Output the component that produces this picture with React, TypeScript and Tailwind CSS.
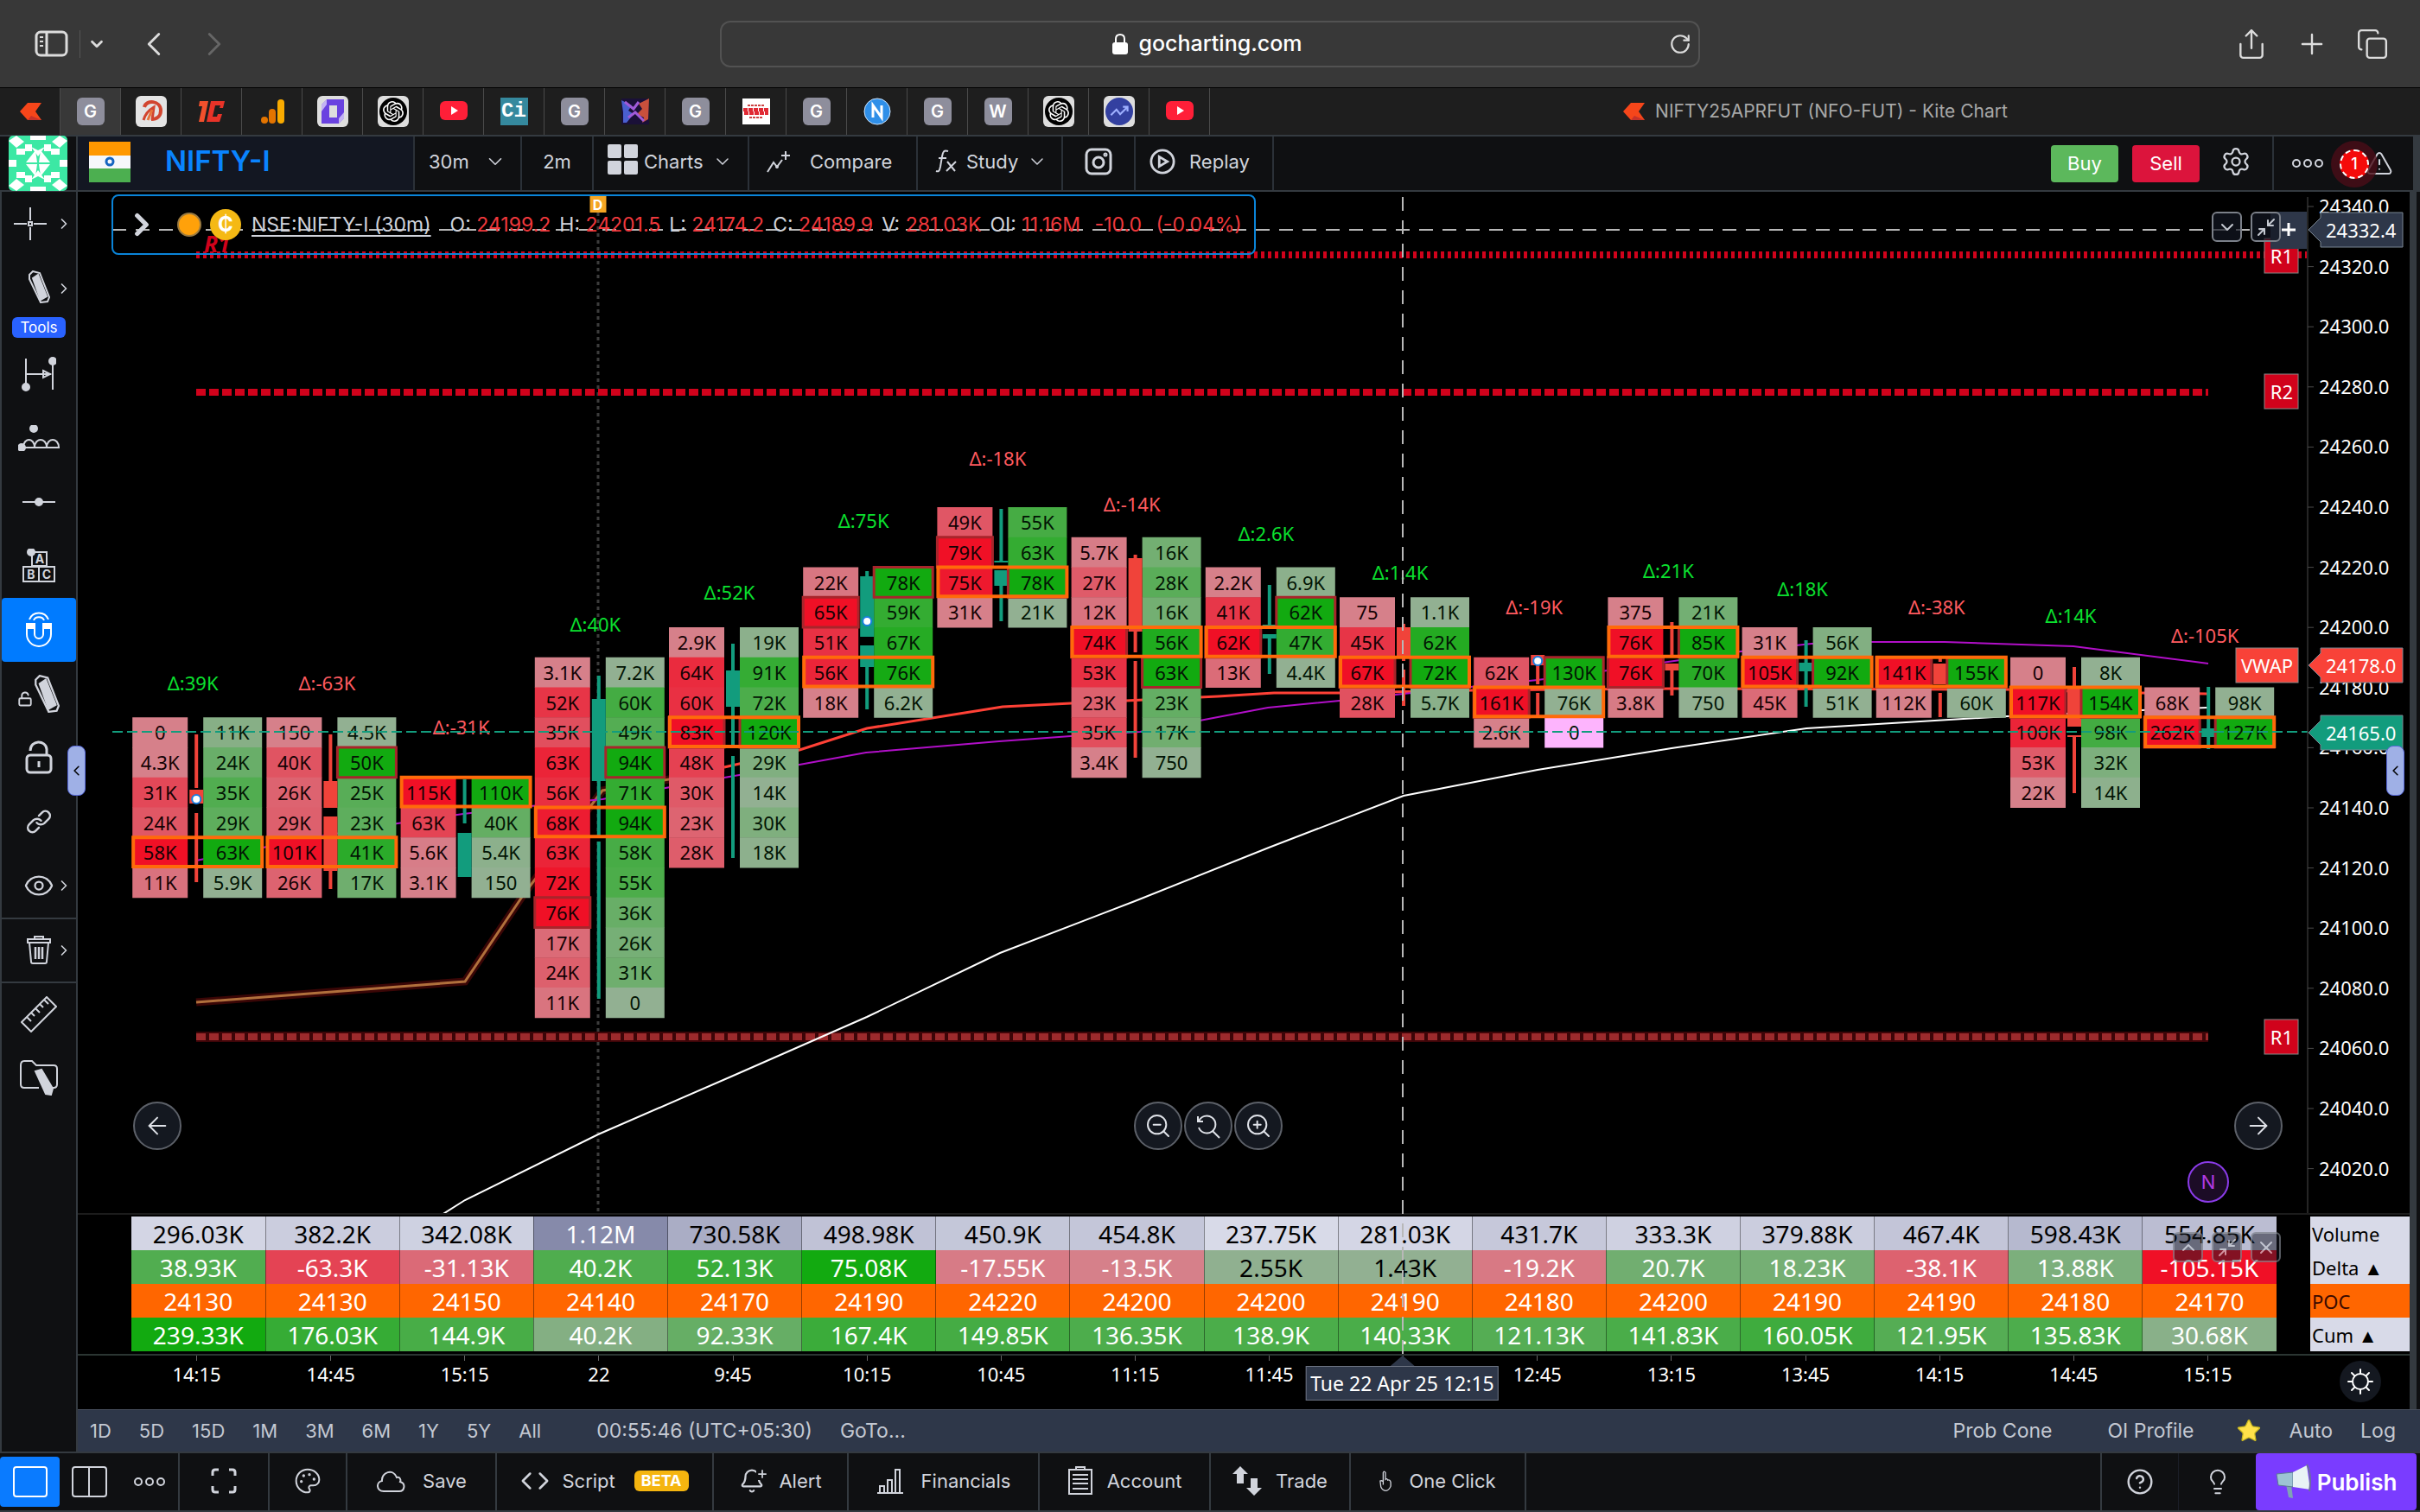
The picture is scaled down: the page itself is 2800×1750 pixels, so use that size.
import type { ReactNode } from "react";
import {
  ArrowLeft,
  ArrowRight,
  Bell,
  ChevronDown,
  ChevronLeft,
  ChevronRight,
  ChevronUp,
  CircleHelp,
  Code,
  Copy,
  Eye,
  Lightbulb,
  LockOpen,
  Minimize2,
  Palette,
  Plus,
  RotateCw,
  Settings,
  Share,
  Star,
  TriangleAlert,
  X,
  ZoomIn,
  ZoomOut,
} from "lucide-react";
import { SiOpenai } from "react-icons/si";

type Bar = {
  time: string;
  top: number; // index of the first price row
  sell: string[];
  buy: string[];
  poc: number;
  maxSell?: number;
  maxBuy?: number;
  up: boolean;
  wick: number[][];
  body: number[][];
  dot?: number;
  delta: string;
  deltaY: number;
};

const bars: Bar[] = [
  { time: "14:15", top: 7, sell: ["0", "4.3K", "31K", "24K", "58K", "11K"], buy: ["11K", "24K", "35K", "29K", "63K", "5.9K"], poc: 4, up: false, wick: [[850, 912], [941, 1021]], body: [[914, 930]], dot: 925, delta: "39K", deltaY: 791 },
  { time: "14:45", top: 7, sell: ["150", "40K", "26K", "29K", "101K", "26K"], buy: ["4.5K", "50K", "25K", "23K", "41K", "17K"], poc: 4, maxBuy: 1, up: false, wick: [[850, 904], [1008, 1029]], body: [[904, 935], [945, 1008]], delta: "-63K", deltaY: 791 },
  { time: "15:15", top: 9, sell: ["115K", "63K", "5.6K", "3.1K"], buy: ["110K", "40K", "5.4K", "150"], poc: 0, up: true, wick: [[902, 953]], body: [[964, 1015]], delta: "-31K", deltaY: 842 },
  { time: "22", top: 5, sell: ["3.1K", "52K", "35K", "63K", "56K", "68K", "63K", "72K", "76K", "17K", "24K", "11K"], buy: ["7.2K", "60K", "49K", "94K", "71K", "94K", "58K", "55K", "36K", "26K", "31K", "0"], poc: 5, maxSell: 8, maxBuy: 3, up: true, wick: [[782, 968], [974, 1156]], body: [[809, 904]], delta: "40K", deltaY: 723 },
  { time: "9:45", top: 4, sell: ["2.9K", "64K", "60K", "83K", "48K", "30K", "23K", "28K"], buy: ["19K", "91K", "72K", "120K", "29K", "14K", "30K", "18K"], poc: 3, maxSell: 3, maxBuy: 3, up: true, wick: [[745, 865], [875, 993]], body: [[776, 818]], delta: "52K", deltaY: 686 },
  { time: "10:15", top: 2, sell: ["22K", "65K", "51K", "56K", "18K"], buy: ["78K", "59K", "67K", "76K", "6.2K"], poc: 3, maxSell: 1, maxBuy: 0, up: true, wick: [[661, 667], [772, 821]], body: [[667, 737], [747, 772]], dot: 719, delta: "75K", deltaY: 603 },
  { time: "10:45", top: 0, sell: ["49K", "79K", "75K", "31K"], buy: ["55K", "63K", "78K", "21K"], poc: 2, maxSell: 1, maxBuy: 2, up: true, wick: [[589, 650], [678, 719]], body: [[649, 651], [660, 678]], delta: "-18K", deltaY: 531 },
  { time: "11:15", top: 1, sell: ["5.7K", "27K", "12K", "74K", "53K", "23K", "35K", "3.4K"], buy: ["16K", "28K", "16K", "56K", "63K", "23K", "17K", "750"], poc: 3, maxSell: 3, maxBuy: 4, up: false, wick: [[642, 755], [765, 877]], body: [[646, 731]], delta: "-14K", deltaY: 584 },
  { time: "11:45", top: 2, sell: ["2.2K", "41K", "62K", "13K"], buy: ["6.9K", "62K", "47K", "4.4K"], poc: 2, maxSell: 2, maxBuy: 1, up: true, wick: [[677, 724], [734, 780]], body: [[723, 725], [734, 739]], delta: "2.6K", deltaY: 618 },
  { time: "12:15", top: 3, sell: ["75", "45K", "67K", "28K"], buy: ["1.1K", "62K", "72K", "5.7K"], poc: 2, maxSell: 2, maxBuy: 2, up: false, wick: [[722, 765], [775, 817]], body: [[726, 761]], delta: "1.4K", deltaY: 663 },
  { time: "12:45", top: 5, sell: ["62K", "161K", "2.6K"], buy: ["130K", "76K", "0"], poc: 1, maxSell: 1, maxBuy: 0, up: false, wick: [[758, 792], [802, 830]], body: [[758, 770]], dot: 765, delta: "-19K", deltaY: 703 },
  { time: "13:15", top: 3, sell: ["375", "76K", "76K", "3.8K"], buy: ["21K", "85K", "70K", "750"], poc: 1, maxSell: 2, maxBuy: 1, up: false, wick: [[720, 759], [768, 805]], body: [[768, 776]], delta: "21K", deltaY: 661 },
  { time: "13:45", top: 4, sell: ["31K", "105K", "45K"], buy: ["56K", "92K", "51K"], poc: 1, maxSell: 1, maxBuy: 1, up: true, wick: [[741, 818]], body: [[767, 777]], delta: "18K", deltaY: 682 },
  { time: "14:15", top: 5, sell: ["141K", "112K"], buy: ["155K", "60K"], poc: 0, maxSell: 0, maxBuy: 0, up: false, wick: [[762, 766], [802, 830]], body: [[768, 792]], delta: "-38K", deltaY: 703 },
  { time: "14:45", top: 5, sell: ["0", "117K", "100K", "53K", "22K"], buy: ["8K", "154K", "98K", "32K", "14K"], poc: 1, maxSell: 1, maxBuy: 1, up: false, wick: [[772, 797], [852, 918]], body: [[797, 841], [851, 853]], delta: "14K", deltaY: 713 },
  { time: "15:15", top: 6, sell: ["68K", "262K"], buy: ["98K", "127K"], poc: 1, maxSell: 1, maxBuy: 1, up: true, wick: [[795, 867]], body: [[843, 853]], delta: "-105K", deltaY: 736 },
];

const stats = [
  { volume: "296.03K", delta: "38.93K", poc: "24130", cum: "239.33K" },
  { volume: "382.2K", delta: "-63.3K", poc: "24130", cum: "176.03K" },
  { volume: "342.08K", delta: "-31.13K", poc: "24150", cum: "144.9K" },
  { volume: "1.12M", delta: "40.2K", poc: "24140", cum: "40.2K" },
  { volume: "730.58K", delta: "52.13K", poc: "24170", cum: "92.33K" },
  { volume: "498.98K", delta: "75.08K", poc: "24190", cum: "167.4K" },
  { volume: "450.9K", delta: "-17.55K", poc: "24220", cum: "149.85K" },
  { volume: "454.8K", delta: "-13.5K", poc: "24200", cum: "136.35K" },
  { volume: "237.75K", delta: "2.55K", poc: "24200", cum: "138.9K" },
  { volume: "281.03K", delta: "1.43K", poc: "24190", cum: "140.33K" },
  { volume: "431.7K", delta: "-19.2K", poc: "24180", cum: "121.13K" },
  { volume: "333.3K", delta: "20.7K", poc: "24200", cum: "141.83K" },
  { volume: "379.88K", delta: "18.23K", poc: "24190", cum: "160.05K" },
  { volume: "467.4K", delta: "-38.1K", poc: "24190", cum: "121.95K" },
  { volume: "598.43K", delta: "13.88K", poc: "24180", cum: "135.83K" },
  { volume: "554.85K", delta: "-105.15K", poc: "24170", cum: "30.68K" },
];

const toNumber = (s: string) => {
  const n = parseFloat(s);
  if (s.endsWith("M")) return n * 1000000;
  if (s.endsWith("K")) return n * 1000;
  return n;
};

const mix = (from: number[], to: number[], t: number) => {
  const k = Math.max(0, Math.min(1, t));
  return `rgb(${from.map((c, i) => Math.round(c + (to[i] - c) * k)).join(",")})`;
};

const redScale = (t: number) => mix([214, 128, 138], [240, 16, 38], t);
const greenScale = (t: number) => mix([146, 176, 146], [18, 170, 16], t);

const shade = (values: string[], i: number, scale: (t: number) => string) => {
  const all = values.map(toNumber);
  const nonZero = all.filter((v) => v > 0);
  const min = Math.min(...nonZero);
  const max = Math.max(...nonZero);
  return scale((all[i] - min) / (max - min));
};

const STEP = 155.2;
const ROW = 34.75;
const centerX = (i: number) => 227.2 + i * STEP;
const rowY = (k: number) => 587 + k * ROW;
const priceY = (p: number) => 239 + (24340 - p) * 3.48;
const points = (list: number[][]) => list.map((p) => p.join(",")).join(" ");

const vwapStart = [[227, 1160], [538, 1136], [606, 1035], [697, 915], [780, 901], [838, 888]];
const vwap = [[838, 888], [925, 868], [1003, 843], [1160, 818], [1239, 814], [1409, 806], [1474, 802], [1550, 802], [1704, 799], [1936, 797], [2321, 798], [2477, 802], [2554, 803]];
const purple = [[227, 996], [376, 967], [460, 953], [536, 942], [614, 933], [697, 925], [770, 912], [838, 900], [925, 885], [1002, 871], [1156, 858], [1239, 852], [1319, 847], [1388, 834], [1467, 819], [1550, 811], [1624, 803], [1779, 787], [1860, 776], [2014, 754], [2096, 745], [2165, 743], [2250, 743], [2399, 748], [2555, 768]];
const white = [[508, 1408], [538, 1389], [692, 1313], [846, 1246], [1003, 1177], [1157, 1103], [1313, 1043], [1468, 981], [1624, 921], [1779, 891], [1934, 866], [2090, 843], [2323, 829], [2477, 822], [2554, 819]];

const prices = [24340, 24320, 24300, 24280, 24260, 24240, 24220, 24200, 24180, 24160, 24140, 24120, 24100, 24080, 24060, 24040, 24020];

const Level = ({ y, label }: { y: number; label: string }) => (
  <g>
    <rect x={2620} y={y - 20} width={39} height={40} fill="#d0021b" stroke="#8a8a8a" />
    <text x={2640} y={y + 9} fill="#fff" textAnchor="middle">{label}</text>
  </g>
);

const PriceTag = ({ y, label, fill }: { y: number; label: string; fill: string }) => (
  <g>
    <path d={`M2671 ${y}L2685 ${y - 14}V${y - 20}H2780V${y + 20}H2685V${y + 14}Z`} fill={fill} stroke="#7b8794" />
    <text x={2691} y={y + 9} fill="#fff">{label}</text>
  </g>
);

const FootprintBar = ({ bar, index }: { bar: Bar; index: number }) => {
  const c = centerX(index);
  const color = bar.up ? "#129c7d" : "#f0433a";
  return (
    <g>
      {bar.sell.map((v, i) => (
        <rect key={i} x={c - 74} y={rowY(bar.top + i)} width={64} height={ROW + 0.5} fill={shade(bar.sell, i, redScale)} />
      ))}
      {bar.buy.map((v, i) => (
        <rect key={i} x={c + 8} y={rowY(bar.top + i)} width={68} height={ROW + 0.5} fill={index === 10 && v === "0" ? "#fdb4fd" : shade(bar.buy, i, greenScale)} />
      ))}
      {bar.wick.map((w, i) => (
        <rect key={i} x={c - 2} y={w[0]} width={4} height={w[1] - w[0]} fill={color} />
      ))}
      {bar.body.map((b, i) => (
        <rect key={i} x={c - 8} y={b[0]} width={16} height={b[1] - b[0]} fill={color} />
      ))}
      {bar.maxSell !== undefined && (
        <rect x={c - 74} y={rowY(bar.top + bar.maxSell)} width={64} height={ROW} fill="none" stroke="#a8252b" strokeWidth={3} />
      )}
      {bar.maxBuy !== undefined && (
        <rect x={c + 8} y={rowY(bar.top + bar.maxBuy)} width={68} height={ROW} fill="none" stroke="#a8252b" strokeWidth={3} />
      )}
      <rect x={c - 73} y={rowY(bar.top + bar.poc)} width={149} height={ROW - 1} fill="none" stroke="#ff6a0a" strokeWidth={4} />
      {bar.sell.map((v, i) => (
        <text key={i} x={c - 42} y={rowY(bar.top + i) + 26} textAnchor="middle" fill="#140204">{v}</text>
      ))}
      {bar.buy.map((v, i) => (
        <text key={i} x={c + 42} y={rowY(bar.top + i) + 26} textAnchor="middle" fill="#021404">{v}</text>
      ))}
      {bar.dot && <circle cx={c} cy={bar.dot} r={5} fill="#fff" stroke="#1a7fe0" strokeWidth={2} />}
      <text x={c - 4} y={bar.deltaY + 8} textAnchor="middle" fill={bar.delta.startsWith("-") ? "#ff5a5f" : "#0be02f"} className="text-[22px]">
        Δ:{bar.delta}
      </text>
    </g>
  );
};

const PriceChart = () => (
  <svg viewBox="90 222 2698 1182" className="block w-full font-['Noto_Sans',sans-serif] text-[22px]">
    <line x1={692} y1={246} x2={692} y2={1404} stroke="#3c3c3c" strokeWidth={3} strokeDasharray="4 4" />
    <line x1={227} y1={295} x2={2669} y2={295} stroke="#d0021b" strokeWidth={8} strokeDasharray="4 4" />
    <line x1={227} y1={454} x2={2555} y2={454} stroke="#d0021b" strokeWidth={8} strokeDasharray="11 4" />
    <line x1={227} y1={1200} x2={2555} y2={1200} stroke="#3d0508" strokeWidth={12} />
    <line x1={227} y1={1200} x2={2555} y2={1200} stroke="#9c2a2c" strokeWidth={8} strokeDasharray="11 4" />
    <text x={236} y={292} fill="#d0021b" className="text-[26px] font-bold italic">R1</text>
    <polyline points={points(white)} fill="none" stroke="#fff" strokeWidth={2} />
    <polyline points={points(vwapStart)} fill="none" stroke="#3a0606" strokeWidth={9} />
    <polyline points={points(vwapStart)} fill="none" stroke="#b0703c" strokeWidth={3} />
    <polyline points={points(vwap)} fill="none" stroke="#ff4136" strokeWidth={3} />
    <polyline points={points(purple)} fill="none" stroke="#b10fc8" strokeWidth={2} />
    {bars.map((bar, i) => (
      <FootprintBar key={i} bar={bar} index={i} />
    ))}
    <line x1={130} y1={847} x2={2670} y2={847} stroke="#129c7d" strokeWidth={2} strokeDasharray="12 5" />
    <line x1={130} y1={266} x2={2620} y2={266} stroke="#b8b8b8" strokeWidth={2} strokeDasharray="16 11" />

    <Level y={296} label="R1" />
    <Level y={453} label="R2" />
    <Level y={1200} label="R1" />
    <rect x={2627} y={245} width={42} height={43} fill="#2e3749" />
    <path d="M2648 258V273M2640 266H2656" stroke="#fff" strokeWidth={3} />
    <rect x={2587} y={750} width={72} height={40} fill="#f84238" stroke="#8a8a8a" />
    <text x={2623} y={779} fill="#fff" textAnchor="middle">VWAP</text>

    <line x1={2670} y1={228} x2={2670} y2={1404} stroke="#4a4a4a" strokeWidth={1} />
    <g>
      {prices.map((p) => (
        <g key={p}>
          <line x1={2670} y1={priceY(p)} x2={2677} y2={priceY(p)} stroke="#4a4a4a" />
          <text x={2683} y={priceY(p) + 8} fill="#fff">{p}.0</text>
        </g>
      ))}
      <PriceTag y={266} label="24332.4" fill="#2e3749" />
      <PriceTag y={770} label="24178.0" fill="#f84238" />
      <PriceTag y={848} label="24165.0" fill="#129c7d" />
    </g>
  </svg>
);

const deltaColor = (s: string) => {
  const v = toNumber(s);
  return v < 0 ? redScale((-v - 13500) / 91650) : greenScale((v - 1430) / 73650);
};

const StatsTable = () => (
  <table className="ml-[62px] w-[calc(100%-62px)] table-fixed border-collapse text-center font-['Noto_Sans',sans-serif] text-[28px] leading-[38px] text-white">
    <colgroup>
      {stats.map((s, i) => (
        <col key={i} />
      ))}
      <col className="w-[39px]" />
      <col className="w-[115px]" />
    </colgroup>
    <tbody>
      <tr className="h-[39px]">
        {stats.map((s, i) => (
          <td key={i} className={`border-r border-black/40 p-0 ${s.volume === "1.12M" ? "text-white" : "text-black"}`} style={{ backgroundColor: mix([216, 218, 232], [134, 138, 170], (toNumber(s.volume) - 237750) / 882250) }}>
            {s.volume}
          </td>
        ))}
        <td />
        <th className="bg-[#d8dae8] p-0 pl-0.5 text-left text-[22px] font-normal text-black">Volume</th>
      </tr>
      <tr className="h-[39px]">
        {stats.map((s, i) => (
          <td key={i} className={`border-r border-black/40 p-0 ${i === 8 || i === 9 ? "text-black" : "text-white"}`} style={{ backgroundColor: deltaColor(s.delta) }}>
            {s.delta}
          </td>
        ))}
        <td />
        <th className="bg-[#d8dae8] p-0 pl-0.5 text-left text-[22px] font-normal text-black">Delta ▲</th>
      </tr>
      <tr className="h-[39px]">
        {stats.map((s, i) => (
          <td key={i} className="border-r border-black/40 bg-[#ff6600] p-0">{s.poc}</td>
        ))}
        <td />
        <th className="bg-[#ff6600] p-0 pl-0.5 text-left text-[22px] font-normal text-[#3a0a00]">POC</th>
      </tr>
      <tr className="h-[39px]">
        {stats.map((s, i) => (
          <td key={i} className="border-r border-black/40 p-0" style={{ backgroundColor: greenScale((toNumber(s.cum) - 15000) / 224330) }}>
            {s.cum}
          </td>
        ))}
        <td />
        <th className="bg-[#d8dae8] p-0 pl-0.5 text-left text-[22px] font-normal text-black">Cum ▲</th>
      </tr>
    </tbody>
  </table>
);

const TimeAxis = () => (
  <div className="relative h-16 border-t-2 border-[#2b3532]">
    <div className="ml-[60px] mr-[156px] flex font-['Noto_Sans',sans-serif] text-[22px] leading-[30px] text-white">
      {bars.map((b, i) => (
        <div key={i} className="flex flex-1 flex-col items-center">
          <span className="h-1.5 w-px bg-[#666]" />
          {b.time}
        </div>
      ))}
    </div>
    <div className="absolute left-[56.8%] top-0 flex -translate-x-1/2 flex-col items-center">
      <svg width={28} height={12} viewBox="0 0 28 12"><path d="M14 0L28 12H0Z" fill="#2e3749" /></svg>
      <div className="border border-[#6b7280] bg-[#2e3749] px-1 font-['Noto_Sans',sans-serif] text-[23px] leading-[38px] whitespace-nowrap text-white">Tue 22 Apr 25 12:15</div>
    </div>
    <button aria-label="Axis settings" className="absolute right-[33px] top-1.5 flex size-12 items-center justify-center rounded-full bg-[#141820] text-white">
      <svg width={32} height={32} viewBox="0 0 32 32" fill="none" stroke="currentColor" strokeWidth={2} strokeLinecap="round">
        <circle cx={16} cy={16} r={9} />
        <path d="M16 2v4M16 26v4M2 16h4M26 16h4M6 6l3 3M23 23l3 3M6 26l3-3M23 9l3-3" />
      </svg>
    </button>
  </div>
);

const Tile = ({ bg, children }: { bg: string; children: ReactNode }) => (
  <span className={`flex size-8 items-center justify-center rounded-md text-xl font-semibold text-white ${bg}`}>{children}</span>
);

const Letter = ({ c }: { c: string }) => <Tile bg="bg-[#8e8e9c]">{c}</Tile>;

const Kite = () => (
  <svg width={26} height={22} viewBox="0 0 26 22">
    <path d="M10 1H26L19 11L26 21H10L1 11Z" fill="#f6461a" />
    <path d="M14 16L26 21H10Z" fill="#c6322a" />
  </svg>
);

const Youtube = () => (
  <svg width={32} height={24} viewBox="0 0 32 24">
    <rect width={32} height={22} rx={6} fill="#ff1f38" />
    <path d="M13 6L21 11L13 16Z" fill="#fff" />
  </svg>
);

const OpenAi = () => (
  <span className="flex size-9 items-center justify-center rounded-md bg-[#dedede]">
    <span className="flex size-8 items-center justify-center rounded-full bg-black text-white"><SiOpenai size={24} /></span>
  </span>
);

const tabIcons: ReactNode[] = [
  <Kite />,
  <Letter c="G" />,
  <span className="flex size-9 items-center justify-center rounded-md bg-[#e4e4e4]">
    <svg width={30} height={30} viewBox="0 0 30 30" fill="none" stroke="#d2452f"><path d="M7 10C9 1 26 2 26 14C26 20 22 24 15 24" strokeWidth={4} /><path d="M6 25C8 18 11 14 18 10L16 25" strokeWidth={3} /><path d="M11 25L16 13" strokeWidth={3} stroke="#e8743a" /></svg>
  </span>,
  <svg width={36} height={30} viewBox="0 0 36 30"><path d="M4 3H14L9 27H3L7 9H3Z" fill="#f2502c" /><path d="M33 3L31 11H27L28 8H22L19 21H24L25 18H30L27 27H12L17 3Z" fill="#e83328" /></svg>,
  <svg width={28} height={30} viewBox="0 0 28 30"><circle cx={5} cy={25} r={4} fill="#e37400" /><rect x={10} y={12} width={8} height={17} rx={4} fill="#e37400" /><rect x={20} y={1} width={8} height={28} rx={4} fill="#f9ab00" /></svg>,
  <span className="flex size-9 items-center justify-center rounded-md bg-[#dedede]">
    <svg width={30} height={32} viewBox="0 0 30 32"><path fillRule="evenodd" d="M8 2H28V24L22 30H2V8ZM11 9V23H20V9Z" fill="#6a42e0" /><path d="M2 8L8 2V8L2 16ZM28 24L22 30V24L28 17Z" fill="#fff" opacity={0.6} /></svg>
  </span>,
  <OpenAi />,
  <Youtube />,
  <span className="flex size-8 items-center justify-center bg-[#35899e] font-['Liberation_Mono',monospace] text-[24px] font-bold text-white">Ci</span>,
  <Letter c="G" />,
  <svg width={32} height={30} viewBox="0 0 32 30"><rect width={32} height={30} fill="#1a1038" /><path d="M0 2L12 8L8 14L14 18L6 28H2V16Z" fill="#4a5fd0" /><path d="M32 0L20 6L24 12L18 18L26 22L24 28L31 24Z" fill="#c8503c" /><path d="M4 4L14 12L20 4M8 22L16 16L26 26" stroke="#a05ad8" strokeWidth={3} fill="none" /></svg>,
  <Letter c="G" />,
  <svg width={32} height={30} viewBox="0 0 32 30"><rect width={32} height={30} fill="#fff" /><path d="M1 13H31M2 17H30" stroke="#e02a34" strokeWidth={4} strokeDasharray="5 1" /><path d="M8 22H24M6 8H26" stroke="#c44" strokeWidth={2} strokeDasharray="3 1" /></svg>,
  <Letter c="G" />,
  <svg width={32} height={32} viewBox="0 0 32 32"><circle cx={16} cy={16} r={15} fill="#2f8fe8" stroke="#cfe6ff" strokeWidth={1} /><path d="M11 23V9L21 23V9" stroke="#fff" strokeWidth={3} fill="none" /></svg>,
  <Letter c="G" />,
  <Letter c="W" />,
  <OpenAi />,
  <span className="flex size-9 items-center justify-center rounded-md bg-[#dedede]">
    <svg width={32} height={32} viewBox="0 0 30 30"><circle cx={15} cy={15} r={15} fill="#3340a0" /><path d="M6 19L12 13L16 18L24 10M19 10H24V15" stroke="#9fb0ff" strokeWidth={2} fill="none" /></svg>
  </span>,
  <Youtube />,
];

const BrowserBar = () => (
  <header>
    <div className="grid h-[101px] grid-cols-[1fr_1134px_1fr] items-center bg-[#383838] text-[#dcdcdc]">
      <div className="flex items-center pl-10">
        <button aria-label="Sidebar">
          <svg width={40} height={32} viewBox="0 0 40 32" fill="none" stroke="currentColor" strokeWidth={3}>
            <rect x={2} y={2} width={35} height={27} rx={5} />
            <path d="M14 2V29" />
            <path d="M6 8H10M6 13H10M6 18H10" strokeWidth={2} />
          </svg>
        </button>
        <span className="ml-3 h-8 w-px bg-[#555]" />
        <button aria-label="Tab groups" className="ml-2"><ChevronDown size={22} strokeWidth={3} /></button>
        <button aria-label="Back" className="ml-8"><ChevronLeft size={46} strokeWidth={1.5} /></button>
        <button aria-label="Forward" className="ml-6 text-[#666]"><ChevronRight size={46} strokeWidth={1.5} /></button>
      </div>
      <div className="flex h-[54px] items-center rounded-xl border-2 border-[#525252] pr-2">
        <a href="#" className="flex flex-1 items-center justify-center gap-3 pl-7 text-[25px] font-medium text-white">
          <svg width={18} height={26} viewBox="0 0 18 26"><path d="M4 12V7Q4 2 9 2Q14 2 14 7V12" fill="none" stroke="currentColor" strokeWidth={2} /><rect y={11} width={18} height={14} rx={3} fill="currentColor" /></svg>
          gocharting.com
        </a>
        <button aria-label="Reload"><RotateCw size={26} /></button>
      </div>
      <div className="flex items-center justify-end gap-8 pr-9">
        <button aria-label="Share"><Share size={38} strokeWidth={1.5} /></button>
        <button aria-label="New tab"><Plus size={38} strokeWidth={1.5} /></button>
        <button aria-label="All tabs"><Copy size={38} strokeWidth={1.5} /></button>
      </div>
    </div>
    <nav className="flex h-[55px] border-t border-black bg-[#1e1e1e]">
      {tabIcons.map((icon, i) => (
        <a key={i} href="#" aria-label={`Tab ${i + 1}`} className={`flex w-[70px] shrink-0 items-center justify-center border-r border-[#4a4a4a] ${i === 1 ? "bg-[#383838]" : ""}`}>
          {icon}
        </a>
      ))}
      <a href="#" className="flex flex-1 items-center justify-center gap-3 text-[21px] text-[#a8a8a8]">
        <Kite />
        NIFTY25APRFUT (NFO-FUT) - Kite Chart
      </a>
    </nav>
  </header>
);

const Avatar = () => (
  <svg viewBox="0 0 68 64" className="h-16 w-[68px]">
    <rect width={68} height={64} rx={5} fill="#3ce8a4" />
    <g fill="#fff">
      {["translate(0 0)", "translate(68 0) scale(-1 1)", "translate(0 64) scale(1 -1)", "translate(68 64) scale(-1 -1)"].map((t) => (
        <g key={t} transform={t}>
          <path d="M0 6L9 0L18 7L9 14Z" />
          <rect x={25} y={0} width={9} height={5} />
          <path d="M9 15H19V22H9Z" />
          <path d="M19 10H27V18H19Z" />
          <path d="M20 31L31 17L33 31Z" />
          <path d="M26 13L34 17V24Z" />
          <rect x={0} y={28} width={9} height={4} />
        </g>
      ))}
    </g>
  </svg>
);

const Flag = () => (
  <svg width={48} height={47} viewBox="0 0 48 47">
    <rect width={48} height={16} fill="#ff9800" />
    <rect y={16} width={48} height={16} fill="#f5f7fa" />
    <rect y={31} width={48} height={16} fill="#4caf50" />
    <circle cx={24} cy={23} r={4} fill="none" stroke="#1565c0" strokeWidth={3} />
  </svg>
);

const TopButton = ({ className = "", children }: { className?: string; children: ReactNode }) => (
  <button className={`flex h-full items-center border-r-2 border-[#2b3138] pb-1 ${className}`}>{children}</button>
);

const Dots = () => (
  <svg width={38} height={12} viewBox="0 0 38 12" fill="none" stroke="currentColor" strokeWidth={2}>
    <circle cx={6} cy={6} r={4} />
    <circle cx={19} cy={6} r={4} />
    <circle cx={32} cy={6} r={4} />
  </svg>
);

const TopBar = () => (
  <div className="flex h-[66px] items-center border-y-2 border-[#343a40] bg-[#0f1012] text-[22px] text-[#d1d4dc]">
    <div className="flex h-full w-[90px] items-center justify-center border-r-2 border-[#343a40]"><Avatar /></div>
    <div className="flex h-full w-[390px] items-center gap-10 border-r-2 border-[#2b3138] bg-[#131722] pb-1 pl-[13px]">
      <Flag />
      <a href="#" className="text-[33px] font-semibold text-[#0a84ff]">NIFTY-I</a>
    </div>
    <TopButton className="w-[124px] justify-between pl-4 pr-4">30m <ChevronDown size={26} strokeWidth={1.5} /></TopButton>
    <TopButton className="w-[83px] justify-center">2m</TopButton>
    <TopButton className="w-[180px] gap-1.5 pl-4">
      <svg width={36} height={36} viewBox="0 0 36 36" fill="currentColor" className="mb-1"><rect width={16} height={16} rx={2} /><rect x={19} width={16} height={16} rx={2} /><rect y={19} width={16} height={16} rx={2} /><rect x={19} y={19} width={16} height={16} rx={2} /></svg>
      Charts
      <ChevronDown size={24} strokeWidth={1.5} className="ml-1" />
    </TopButton>
    <TopButton className="w-[195px] gap-5 pl-5">
      <svg width={30} height={30} viewBox="0 0 30 30" fill="none" stroke="currentColor" strokeWidth={2}><path d="M1 27L8 16L12 21L18 13M22 3V13M17 8H27" /><circle cx={12} cy={21} r={1} /></svg>
      Compare
    </TopButton>
    <TopButton className="w-[168px] gap-2.5 pl-5">
      <svg width={26} height={30} viewBox="0 0 26 30" fill="none" stroke="currentColor" strokeWidth={2}><path d="M15 3C10 1 9 4 8 9L6 21C5 26 4 27 1 26M4 11H13M14 15L23 26M24 15L13 26" /></svg>
      Study
      <ChevronDown size={24} strokeWidth={1.5} />
    </TopButton>
    <TopButton className="w-[84px] justify-center">
      <svg width={32} height={32} viewBox="0 0 32 32" fill="none" stroke="currentColor" strokeWidth={3}><rect x={2} y={2} width={28} height={28} rx={6} /><circle cx={16} cy={17} r={6} /><circle cx={24} cy={8} r={1} /></svg>
    </TopButton>
    <TopButton className="w-[160px] gap-4 pl-4">
      <svg width={30} height={30} viewBox="0 0 32 32" fill="none" stroke="currentColor" strokeWidth={3}><circle cx={16} cy={16} r={14} /><path d="M12 10L22 16L12 22Z" /></svg>
      Replay
    </TopButton>
    <div className="ml-auto flex h-full items-center">
      <button className="h-[43px] w-[78px] rounded bg-[#5cb85c] text-white">Buy</button>
      <button className="ml-4 h-[43px] w-[78px] rounded bg-[#dc143c] text-white">Sell</button>
      <TopButton className="w-[86px] justify-center"><span aria-label="Settings"><Settings size={36} strokeWidth={1.5} /></span></TopButton>
      <button aria-label="More" className="ml-5"><Dots /></button>
      <button aria-label="Alerts" className="relative ml-12 mr-[23px]">
        <TriangleAlert size={32} strokeWidth={1.5} />
        <span className="absolute -left-10 -top-2.5 flex size-[54px] items-center justify-center rounded-full bg-[#4a0c18]/80">
          <span className="flex size-[34px] items-center justify-center rounded-full border-2 border-dashed border-white bg-[#f50a0a] text-lg font-medium text-white">1</span>
        </span>
      </button>
      <span className="h-full w-2 bg-[#343a40]" />
    </div>
  </div>
);

const Pencil = ({ size = 34 }: { size?: number }) => (
  <svg width={size - 8} height={size + 4} viewBox="0 0 26 38" fill="none" stroke="currentColor" strokeWidth={2}>
    <path d="M2 5L6 1L14 3L25 31L23 36L15 37L2 10Z" />
    <path d="M6 9L12 5L22 30L15 34Z" fill="currentColor" />
  </svg>
);

const sideTools: { label: string; icon: ReactNode; arrow?: boolean; badge?: string; active?: boolean; line?: boolean }[] = [
  { label: "Cursor", arrow: true, icon: <svg width={38} height={38} viewBox="0 0 38 38" fill="none" stroke="currentColor" strokeWidth={2} className="mr-5"><path d="M19 0V15M19 23V38M0 19H15M23 19H38M17 17H21V21H17Z" /></svg> },
  { label: "Drawing tools", arrow: true, badge: "Tools", icon: <Pencil /> },
  { label: "Measure", icon: <svg width={40} height={40} viewBox="0 0 40 40" fill="none" stroke="currentColor" strokeWidth={2}><path d="M5 2V34M36 6V38M5 20H34M25 16L33 20L25 24Z" /><circle cx={5} cy={35} r={4} fill="currentColor" /><circle cx={36} cy={5} r={4} fill="currentColor" /></svg> },
  { label: "Cycles", icon: <svg width={48} height={30} viewBox="0 0 48 30" fill="none" stroke="currentColor" strokeWidth={2}><path d="M4 26H48M6 26C6 14 19 14 19 26C19 14 33 14 33 26C33 14 47 14 47 26" /><circle cx={4} cy={26} r={4} fill="currentColor" /><circle cx={18} cy={4} r={4} fill="currentColor" /></svg> },
  { label: "Line", icon: <svg width={38} height={10} viewBox="0 0 38 10" stroke="currentColor" strokeWidth={2}><path d="M0 5H38" /><circle cx={19} cy={5} r={4} fill="currentColor" /></svg> },
  { label: "Text", icon: <svg width={38} height={40} viewBox="0 0 38 40" fill="none" stroke="currentColor" strokeWidth={2}><path d="M11 4H28V20H11ZM1 21H19V38H1ZM19 21H37V38H19Z" /><circle cx={10} cy={4} r={4} fill="currentColor" /><g fill="currentColor" stroke="none" fontSize={14} fontWeight={700} textAnchor="middle"><text x={20} y={17}>A</text><text x={10} y={35}>B</text><text x={28} y={35}>C</text></g></svg> },
  { label: "Magnet", active: true, icon: <svg width={32} height={42} viewBox="0 0 32 42" fill="none" stroke="currentColor" strokeWidth={2}><path d="M2 14V26A14 14 0 0 0 30 26V14H21V26A5 5 0 0 1 11 26V14ZM5 9C9 -1 23 -1 27 9M10 10C12 5 20 5 22 10" /><path d="M2 14H11V19H2ZM21 14H30V19H21Z" fill="currentColor" /></svg> },
  { label: "Lock drawing mode", icon: <span className="flex items-center"><LockOpen size={18} strokeWidth={2.5} className="mt-3" /><Pencil size={40} /></span> },
  {
    label: "Lock all",
    icon: <svg width={32} height={40} viewBox="0 0 32 40" fill="none" stroke="currentColor" strokeWidth={3}><rect x={2} y={17} width={28} height={20} rx={4} /><path d="M6 12C6 -1 24 -1 25 10V17M16 24V31" /></svg>,
  },
  { label: "Link", icon: <svg width={30} height={30} viewBox="0 0 24 24" fill="none" stroke="currentColor" strokeWidth={2} strokeLinecap="round"><path d="M10 13a5 5 0 0 0 7 .5l4-4a4 4 0 0 0-6-6l-3 3" /><path d="M14 11a5 5 0 0 0-7-.5l-4 4a4 4 0 0 0 6 6l3-3" /></svg> },
  { label: "Hide", arrow: true, icon: <Eye size={36} strokeWidth={1.5} /> },
  {
    label: "Remove",
    arrow: true,
    line: true,
    icon: <svg width={30} height={34} viewBox="0 0 30 34" fill="none" stroke="currentColor" strokeWidth={2}><path d="M2 4H28V8H2ZM10 4V1H20V4M4 8L6 30Q6 32 8 32H22Q24 32 24 30L26 8" /><path d="M11 13V27M15 13V27M19 13V27" strokeWidth={2.5} /></svg>,
  },
  { label: "Ruler", line: true, icon: <svg width={42} height={42} viewBox="0 0 42 42" fill="none" stroke="currentColor" strokeWidth={2}><path d="M1 30L30 1L41 12L12 41ZM7 24L12 29M12 19L16 23M17 14L22 19M22 9L26 13M27 4L32 9" /></svg> },
  { label: "Object tree", icon: <svg width={44} height={42} viewBox="0 0 44 42" fill="none" stroke="currentColor" strokeWidth={2}><path d="M22 33H5Q1 33 1 29V7Q1 2 5 2H14L19 7H39Q43 7 43 11V29Q43 33 39 33H36" /><path d="M18 14L25 12L38 34L36 41L30 40Z" fill="currentColor" /></svg> },
];

const SideBar = () => (
  <aside className="flex w-[90px] shrink-0 flex-col border-x-2 border-r-[#343a40] border-l-[#343a40] bg-[#0f1012] text-[#d1d4dc]">
    {sideTools.map((t) => (
      <button
        key={t.label}
        aria-label={t.label}
        className={`relative flex shrink-0 flex-col items-center justify-center gap-4 ${t.badge ? "h-[100px] pt-3" : "h-[74px]"} ${t.active ? "rounded bg-[#007bff] text-white" : ""} ${t.line ? "border-t-2 border-[#343a40]" : ""}`}
      >
        {t.icon}
        {t.badge && <span className="w-[62px] rounded-md bg-[#2962ff] text-center text-[17px] leading-6 text-white">{t.badge}</span>}
        {t.arrow && <ChevronRight size={20} className={`absolute right-1 ${t.badge ? "top-7" : ""}`} />}
      </button>
    ))}
  </aside>
);

const RoundButton = ({ label, children }: { label: string; children: ReactNode }) => (
  <button aria-label={label} className="flex size-[56px] items-center justify-center rounded-full border-2 border-[#5c6068] bg-[#141820] text-[#dfe2e8]">{children}</button>
);

const PaneButton = ({ label, children }: { label: string; children: ReactNode }) => (
  <button aria-label={label} className="flex size-[35px] items-center justify-center rounded-md border-2 border-[#7b8089] bg-[#131722]/70 text-[#c4c8d0]">{children}</button>
);

const legend = [
  ["O:", "24199.2"],
  ["H:", "24201.5"],
  ["L:", "24174.2"],
  ["C:", "24189.9"],
  ["V:", "281.03K"],
  ["OI:", "11.16M"],
  ["", "-10.0"],
  ["", "(-0.04%)"],
];

const ChartArea = () => (
  <div className="relative flex-1 bg-black">
    <div className="relative">
      <PriceChart />
      <div className="absolute left-[39px] top-[3px] flex h-[70px] w-[1324px] items-center rounded-lg border-2 border-[#0a84d8] pl-3 text-[23px] text-[#d1d4dc]">
        <button aria-label="Expand legend"><ChevronRight size={42} strokeWidth={3} /></button>
        <span className="ml-5 size-7 rounded-full border-2 border-[#9a7a40] bg-[#ffa10a]" />
        <span className="ml-2.5 flex size-9 items-center justify-center rounded-full bg-[#f5b914] text-[24px] font-bold text-white">₵</span>
        <a href="#" className="ml-3 mr-3 underline underline-offset-4">NSE:NIFTY-I (30m)</a>
        {legend.map(([k, v], i) => (
          <span key={i} className="ml-2.5 whitespace-pre">
            {k} <span className="text-[#f0383c]">{v}</span>
          </span>
        ))}
      </div>
      <span className="absolute left-[22.3%] top-[5px] flex h-[19px] w-[19px] -translate-x-1/2 items-center justify-center bg-[#f5a623] text-[16px] font-bold text-white">D</span>
      <div className="absolute right-[149px] top-[23px] flex gap-2.5">
        <PaneButton label="Collapse pane"><ChevronDown size={24} /></PaneButton>
        <PaneButton label="Minimise pane"><Minimize2 size={24} /></PaneButton>
      </div>
      <div className="absolute bottom-[73px] left-16 right-[147px] flex items-center justify-between">
        <RoundButton label="Scroll left"><ArrowLeft size={32} strokeWidth={1.5} /></RoundButton>
        <div className="flex gap-0.5">
          <RoundButton label="Zoom out"><ZoomOut size={32} strokeWidth={1.5} /></RoundButton>
          <RoundButton label="Reset zoom">
            <svg width={32} height={32} viewBox="0 0 32 32" fill="none" stroke="currentColor" strokeWidth={2}><path d="M4 5V11H10M5 11A10 10 0 1 1 5 18M21 22L29 30" /></svg>
          </RoundButton>
          <RoundButton label="Zoom in"><ZoomIn size={32} strokeWidth={1.5} /></RoundButton>
        </div>
        <RoundButton label="Scroll right"><ArrowRight size={32} strokeWidth={1.5} /></RoundButton>
      </div>
      <button className="absolute bottom-3 right-[209px] flex size-12 items-center justify-center rounded-full border-2 border-[#8a3be8] bg-[#1c0c26] text-[22px] text-[#b03ae0]">N</button>
    </div>
    <div className="relative border-t-2 border-[#1c1c1c] pb-[3px] pt-0.5">
      <StatsTable />
      <div className="absolute right-[149px] top-5 flex gap-2.5 opacity-70">
        <PaneButton label="Expand pane"><ChevronUp size={24} /></PaneButton>
        <PaneButton label="Minimise table"><Minimize2 size={24} /></PaneButton>
        <PaneButton label="Close table"><X size={24} /></PaneButton>
      </div>
    </div>
    {/* crosshair runs through both panes, down to the time axis */}
    <div className="pointer-events-none absolute bottom-16 left-[56.8%] top-1.5 w-0.5 bg-[repeating-linear-gradient(to_bottom,#b8b8b8_0_16px,transparent_16px_27px)]" />
    <TimeAxis />
    <button aria-label="Collapse toolbar" className="absolute -left-3 top-[641px] flex h-[58px] w-[21px] items-center justify-center rounded-lg border border-[#5566d8] bg-[#9fb0e6] text-black"><ChevronLeft size={20} /></button>
    <button aria-label="Open side panel" className="absolute right-1.5 top-[641px] flex h-[58px] w-[21px] items-center justify-center rounded-lg border border-[#5566d8] bg-[#9fb0e6] text-black"><ChevronLeft size={20} /></button>
  </div>
);

const ranges = ["1D", "5D", "15D", "1M", "3M", "6M", "1Y", "5Y", "All"];

const RangeBar = () => (
  <div className="flex h-[49px] items-center border-t border-[#454c5a] bg-[#2e3749] pl-3.5 pr-7 text-[22px] text-[#c3c8d2]">
    <div className="flex gap-8">
      {ranges.map((r) => (
        <button key={r}>{r}</button>
      ))}
    </div>
    <span className="ml-16 text-[23px]">00:55:46 (UTC+05:30)</span>
    <button className="ml-8 text-[23px]">GoTo...</button>
    <div className="ml-auto flex items-center text-[23px]">
      <button>Prob Cone</button>
      <button className="ml-16">OI Profile</button>
      <Star size={30} fill="#ffe14a" stroke="#c9b820" strokeWidth={1} className="ml-12" />
      <button className="ml-8">Auto</button>
      <button className="ml-8">Log</button>
    </div>
  </div>
);

const BottomButton = ({ className = "", label, children }: { className?: string; label?: string; children: ReactNode }) => (
  <button aria-label={label} className={`flex h-full shrink-0 items-center justify-center border-r-2 border-[#343a40] pb-0.5 ${className}`}>{children}</button>
);

const BottomBar = () => (
  <footer className="flex h-[70px] items-center border-y-2 border-[#343a40] bg-[#0f1012] text-[22px] text-[#d1d4dc]">
    <div className="flex h-full w-[208px] shrink-0 items-center border-r-2 border-[#343a40]">
      <button aria-label="Single layout" className="flex h-[58px] w-[69px] items-center justify-center rounded bg-[#0a7bff]">
        <span className="h-9 w-10 rounded border-2 border-white" />
      </button>
      <button aria-label="Two columns" className="ml-3.5 flex h-9 w-[41px] rounded border-2 border-[#d1d4dc]"><span className="h-full w-1/2 border-r-2 border-[#d1d4dc]" /></button>
      <button aria-label="More layouts" className="ml-[30px]"><Dots /></button>
    </div>
    <BottomButton label="Full screen" className="w-[104px]">
      <svg width={30} height={30} viewBox="0 0 30 30" fill="none" stroke="currentColor" strokeWidth={3}><path d="M2 9V5Q2 2 5 2H9M21 2H25Q28 2 28 5V9M28 21V25Q28 28 25 28H21M9 28H5Q2 28 2 25V21" /></svg>
    </BottomButton>
    <BottomButton label="Theme" className="w-[90px]"><Palette size={32} strokeWidth={1.5} /></BottomButton>
    <BottomButton className="w-[173px] gap-5">
      <svg width={34} height={28} viewBox="0 0 34 28" fill="none" stroke="currentColor" strokeWidth={2}><path d="M9 26C0 26 0 15 7 14C6 4 20 -1 24 10C28 9 29 13 28 15C35 17 33 26 27 26Z" /></svg>
      Save
    </BottomButton>
    <BottomButton className="w-[251px] gap-3.5">
      <Code size={34} strokeWidth={1.8} />
      Script
      <span className="ml-2 rounded-md bg-[#f5b50f] px-2 text-[18px] font-bold leading-6 text-white">BETA</span>
    </BottomButton>
    <BottomButton className="w-[156px] gap-4">
      <span className="relative"><Bell size={30} strokeWidth={1.8} /><Plus size={14} strokeWidth={3} className="absolute -right-1 top-0 bg-[#0f1012]" /></span>
      Alert
    </BottomButton>
    <BottomButton className="w-[221px] gap-5">
      <svg width={32} height={30} viewBox="0 0 32 30" fill="none" stroke="currentColor" strokeWidth={2}><path d="M1 29H31M4 28V21H9V28M13 28V14H18V28M22 28V2H27V28" /></svg>
      Financials
    </BottomButton>
    <BottomButton className="w-[198px] gap-4">
      <svg width={30} height={34} viewBox="0 0 30 34" fill="none" stroke="currentColor" strokeWidth={2}><path d="M2 4H28V32H2ZM10 4V1H20V4M6 10H24M6 15H24M6 20H24M6 26H24" /></svg>
      Account
    </BottomButton>
    <BottomButton className="w-[162px] gap-4">
      <svg width={34} height={34} viewBox="0 0 34 34" fill="currentColor"><path d="M9 0L18 9H13V20H5V9H0ZM25 34L16 25H21V14H29V25H34Z" /></svg>
      Trade
    </BottomButton>
    <BottomButton className="w-[203px] gap-5">
      <svg width={14} height={28} viewBox="0 0 16 28" fill="none" stroke="currentColor" strokeWidth={1.5}><path d="M5 15V3Q6 0 8 3V12Q10 10 11 13Q14 12 15 16V21Q13 26 9 27Q4 27 2 22L1 14Q3 13 5 15V19" /></svg>
      One Click
    </BottomButton>
    <div className="h-full flex-1 border-r-2 border-[#343a40]" />
    <button aria-label="Help" className="flex h-full w-[88px] items-center justify-center"><CircleHelp size={32} strokeWidth={1.8} /></button>
    <button aria-label="Ideas" className="flex h-full w-[90px] items-center justify-center border-l border-[#1b1e28]"><Lightbulb size={32} strokeWidth={1.5} /></button>
    <button className="mr-1 flex h-full w-[186px] items-center justify-center gap-1.5 rounded bg-[#7a3cff] text-[26px] font-semibold text-white">
      <svg width={42} height={42} viewBox="0 0 42 42">
        <path d="M12 24H18L20 40L15 39Z" fill="#7fa3b5" />
        <path d="M1 12L20 10V27L3 25Z" fill="#9dc3d3" stroke="#5a7a94" />
        <path d="M20 10L36 2L40 30L20 27Z" fill="#e9f3f5" />
        <path d="M36 1Q42 12 39 32" stroke="#6d6f9c" strokeWidth={2} fill="none" />
      </svg>
      Publish
    </button>
  </footer>
);

const App = () => (
  <div className="flex min-h-screen flex-col bg-black font-['Inter',sans-serif]">
    <BrowserBar />
    <TopBar />
    <main className="flex flex-1">
      <SideBar />
      <div className="flex min-w-0 flex-1 flex-col">
        <div className="flex flex-1">
          <ChartArea />
          <div className="w-3 border-l-8 border-[#343a40] bg-[#0f1012]" />
        </div>
        <RangeBar />
      </div>
    </main>
    <BottomBar />
  </div>
);

export default App;
